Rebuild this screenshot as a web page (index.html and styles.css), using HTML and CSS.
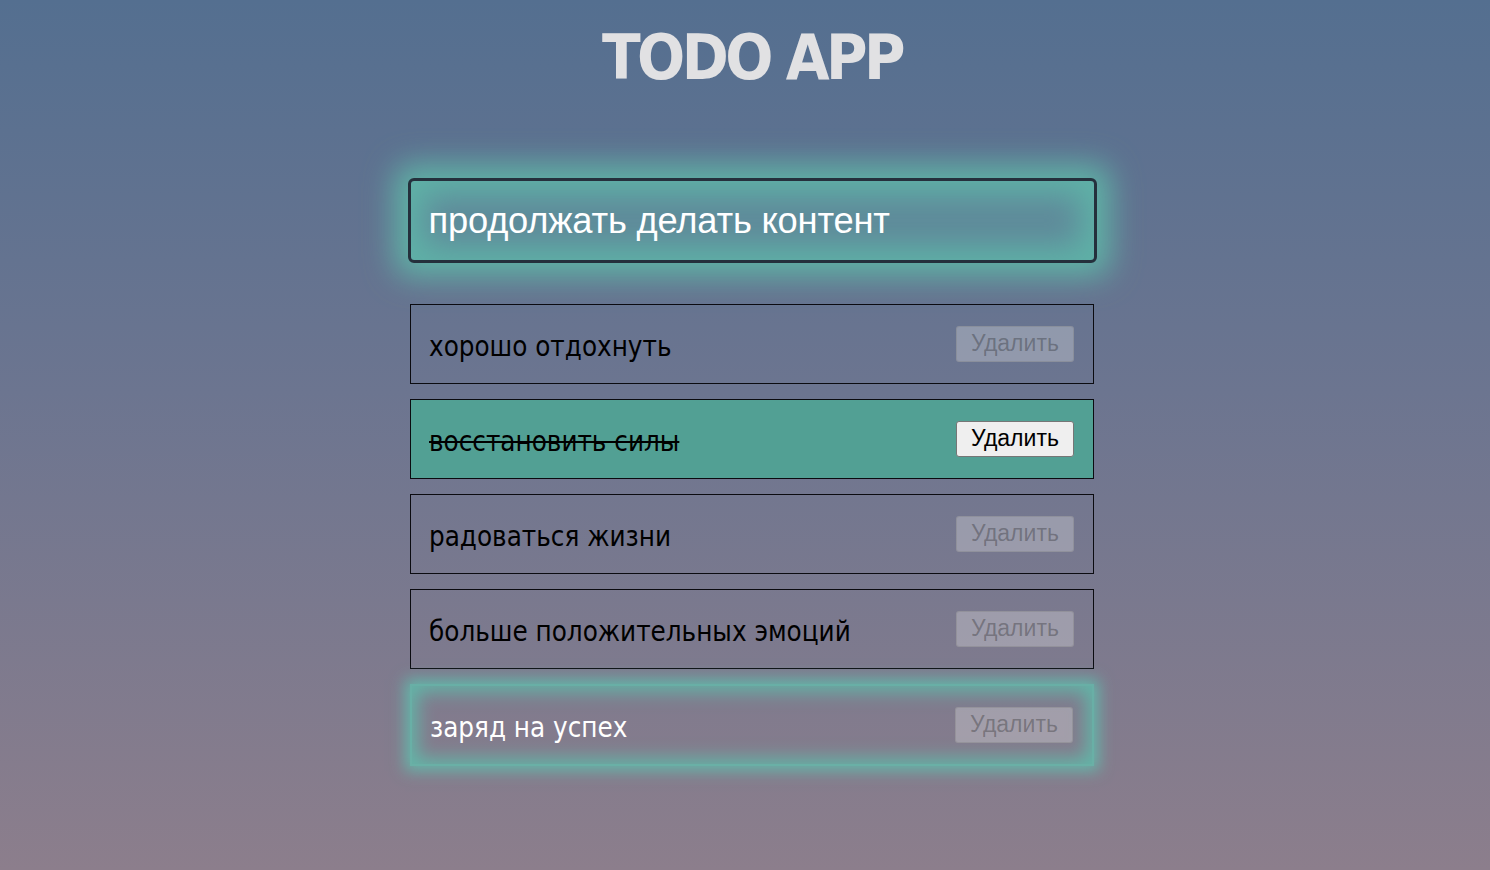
FILE: index.html
```html
<!DOCTYPE html>
<html lang="ru">
<head>
<meta charset="utf-8">
<title>TODO APP</title>
<link rel="stylesheet" href="styles.css">
</head>
<body>
<div class="app">
  <h1 class="title">TODO APP</h1>
  <form class="new-todo">
    <input class="new-todo-input" type="text" value="продолжать делать контент">
  </form>
  <ul class="todo-list">
    <li class="todo-item">
      <span class="todo-text">хорошо отдохнуть</span>
      <button class="todo-delete" type="button" disabled>Удалить</button>
    </li>
    <li class="todo-item todo-item--done">
      <span class="todo-text">восстановить силы</span>
      <button class="todo-delete" type="button">Удалить</button>
    </li>
    <li class="todo-item">
      <span class="todo-text">радоваться жизни</span>
      <button class="todo-delete" type="button" disabled>Удалить</button>
    </li>
    <li class="todo-item">
      <span class="todo-text">больше положительных эмоций</span>
      <button class="todo-delete" type="button" disabled>Удалить</button>
    </li>
    <li class="todo-item todo-item--active">
      <span class="todo-text">заряд на успех</span>
      <button class="todo-delete" type="button" disabled>Удалить</button>
    </li>
  </ul>
</div>
</body>
</html>
```

FILE: styles.css
```css
html, body {
  margin: 0;
  padding: 0;
  height: 100%;
}

body {
  background: linear-gradient(180deg, #546f90 0%, #6c7590 45%, #8c7e8c 100%);
  font-family: "DejaVu Sans Condensed", "DejaVu Sans", sans-serif;
  padding-left: 14px;
  box-sizing: border-box;
}

.app {
  display: flex;
  flex-direction: column;
  align-items: center;
}

.title {
  margin: 26px 0 0;
  font-size: 63px;
  line-height: 1;
  font-weight: bold;
  color: #e1e1e3;
  letter-spacing: -3.6px;
}

.new-todo {
  margin: 89px 0 0;
}

.new-todo-input {
  display: block;
  box-sizing: border-box;
  width: 689px;
  height: 85px;
  border: 3px solid #25303c;
  border-radius: 6px;
  padding: 0 18px;
  background: #5f8a9a;
  color: #ffffff;
  font-family: "Liberation Sans", Arial, sans-serif;
  font-size: 36.3px;
  letter-spacing: -0.2px;
  box-shadow: 0 0 30px 14px rgba(95, 181, 167, 0.95), inset 0 0 30px 14px #5fb1a7;
  outline: none;
}

.todo-list {
  list-style: none;
  margin: 41px 0 0;
  padding: 0;
  display: flex;
  flex-direction: column;
  gap: 15px;
}

.todo-item {
  box-sizing: border-box;
  width: 684px;
  height: 80px;
  border: 1px solid #0b0b10;
  display: flex;
  align-items: center;
  justify-content: space-between;
  padding: 4px 19px 0 18px;
}

.todo-text {
  font-size: 27.5px;
  color: #000000;
}

.todo-item--done {
  background: #52a094;
}

.todo-item--done .todo-text {
  text-decoration: line-through;
}

.todo-item--active {
  height: 82px;
  border: 2px solid rgba(99, 189, 173, 0.8);
  box-shadow: 0 0 14px 5px rgba(95, 191, 174, 0.85), inset 0 0 18px 6px rgba(95, 186, 170, 0.9);
}

.todo-item--active .todo-text {
  color: #ffffff;
}

.todo-delete {
  box-sizing: border-box;
  width: 118px;
  height: 36px;
  margin-top: -5px;
  padding: 0 10px;
  font-family: "Liberation Sans", Arial, sans-serif;
  font-size: 23px;
  color: #000000;
  background: #efefef;
  border: 1px solid #767676;
  border-radius: 3px;
}

.todo-delete:disabled {
  color: rgba(16, 16, 16, 0.3);
  background: rgba(239, 239, 239, 0.3);
  border-color: rgba(118, 118, 118, 0.3);
}
```
